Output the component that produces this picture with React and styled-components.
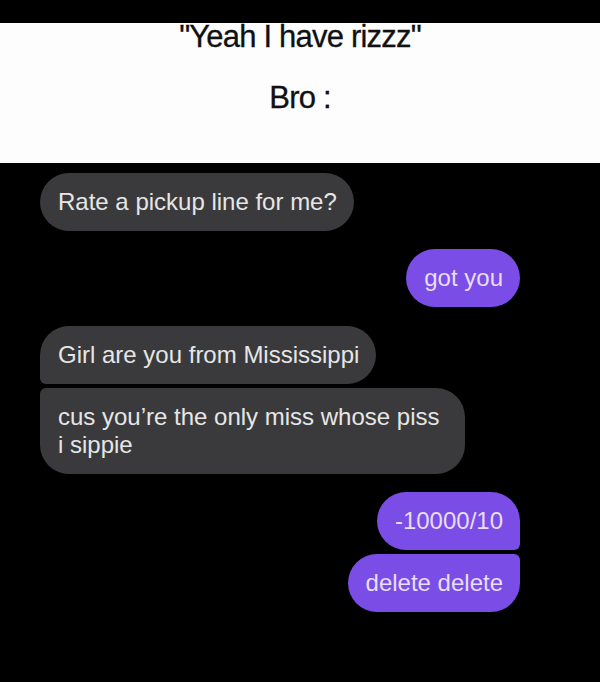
import React from "react";
import styled, { createGlobalStyle } from "styled-components";

const Global = createGlobalStyle`
  html, body { margin: 0; padding: 0; background: #000; }
  body { font-family: "Liberation Sans", Arial, sans-serif; }
`;

const Page = styled.div`
  width: 600px;
  height: 682px;
  background: #000;
  padding-top: 23px;
  box-sizing: border-box;
  overflow: hidden;
`;

const Header = styled.header`
  background: #fdfdfd;
  height: 140px;
  display: flex;
  flex-direction: column;
  align-items: center;
  box-sizing: border-box;
`;

const Caption = styled.div`
  font-size: 31px;
  line-height: 31px;
  color: #111;
  letter-spacing: -0.8px;
  -webkit-text-stroke: 0.3px #111;
  margin-top: ${(p) => p.$top}px;
`;

const Chat = styled.main`
  display: flex;
  flex-direction: column;
  padding: 10px 80px 0 40px;
`;

const Group = styled.div`
  display: flex;
  flex-direction: column;
  align-items: ${(p) => (p.$me ? "flex-end" : "flex-start")};
  gap: 4px;
  margin-bottom: ${(p) => p.$mb}px;
`;

const Bubble = styled.div`
  background: ${(p) => (p.$me ? "#7a4de6" : "#3a3a3c")};
  color: ${(p) => (p.$me ? "#e9ddf7" : "#e6e6e6")};
  font-size: 24px;
  line-height: 28px;
  padding: 15px 17px 15px 18px;
  border-radius: 29px;
  max-width: 425px;
  box-sizing: border-box;
  ${(p) => p.$tl && `border-top-left-radius: 6px;`}
  ${(p) => p.$bl && `border-bottom-left-radius: 6px;`}
  ${(p) => p.$tr && `border-top-right-radius: 6px;`}
  ${(p) => p.$br && `border-bottom-right-radius: 6px;`}
`;

export default function App() {
  return (
    <Page>
      <Global />
      <Header>
        <Caption $top={-2}>"Yeah I have rizzz"</Caption>
        <Caption $top={30}>Bro :</Caption>
      </Header>
      <Chat>
        <Group $mb={18}>
          <Bubble>Rate a pickup line for me?</Bubble>
        </Group>
        <Group $me $mb={19}>
          <Bubble $me>got you</Bubble>
        </Group>
        <Group $mb={18}>
          <Bubble $bl>Girl are you from Mississippi</Bubble>
          <Bubble $tl>cus you’re the only miss whose piss i sippie</Bubble>
        </Group>
        <Group $me $mb={0}>
          <Bubble $me $br>-10000/10</Bubble>
          <Bubble $me $tr>delete delete</Bubble>
        </Group>
      </Chat>
    </Page>
  );
}
